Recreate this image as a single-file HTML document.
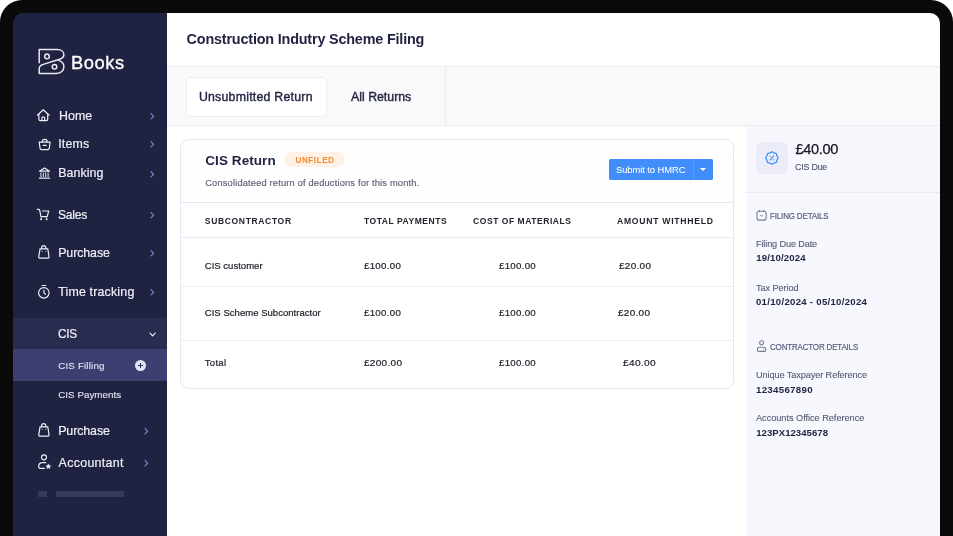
<!DOCTYPE html>
<html lang="en">
<head>
<meta charset="utf-8">
<title>Construction Industry Scheme Filing</title>
<style>
html,body{margin:0;padding:0;}
body{width:953px;height:536px;overflow:hidden;background:#fff;position:relative;font-family:"Liberation Sans",sans-serif;}
.frame{position:absolute;left:0;top:0;width:953px;height:620px;background:#0a0a0a;border-radius:22px 22px 0 0;}
.screen{position:absolute;left:13px;top:13px;width:927px;height:600px;border-radius:10px 10px 0 0;overflow:hidden;}
.page{position:absolute;left:-13px;top:-13px;width:953px;height:620px;will-change:transform;}
.page div,.page span,.page svg{position:absolute;}
.t{white-space:nowrap;line-height:1;}
.side{left:13px;top:13px;width:154px;height:600px;background:#1f2240;}
.hl{height:1px;}
svg{overflow:visible;}
.ic{fill:none;stroke:#eceef6;stroke-width:1.18;stroke-linecap:round;stroke-linejoin:round;}
</style>
</head>
<body>
<div class="frame"></div>
<div class="screen"><div class="page">
<div class="side"></div>
<div style="left:13px;top:318px;width:154px;height:31px;background:#292b4f;"></div>
<div style="left:13px;top:349px;width:154px;height:32px;background:#3c3f70;"></div>
<div style="left:38px;top:491px;width:9px;height:6px;background:#363957;"></div>
<div style="left:56px;top:491px;width:68px;height:6px;background:#363957;"></div>
<div style="left:167px;top:13px;width:773px;height:610px;background:#fff;"></div>
<div style="left:167px;top:66px;width:773px;height:60px;background:#f9f9fb;border-top:1px solid #ebebf0;border-bottom:1px solid #ebebf0;box-sizing:border-box;"></div>
<div style="left:186px;top:77px;width:141px;height:40px;background:#fff;border:1px solid #ececf3;border-radius:4px;box-sizing:border-box;"></div>
<div style="left:445px;top:67px;width:1px;height:58px;background:#ebebf0;"></div>
<div style="left:746px;top:126px;width:194px;height:500px;background:#f7f8fe;"></div>
<div class="hl" style="left:746px;top:192px;width:194px;background:#e8e9f3;"></div>
<div style="left:756px;top:142px;width:32px;height:32px;border-radius:7px;background:#ebecf7;"></div>
<div style="left:180px;top:139px;width:554px;height:250px;border:1px solid #e6e7f2;border-radius:9px;box-sizing:border-box;background:#fff;"></div>
<div style="left:182px;top:147px;width:550px;height:54px;background-image:radial-gradient(circle,#f1f2fa 0.55px,rgba(255,255,255,0) 1px),radial-gradient(circle,#f1f2fa 0.55px,rgba(255,255,255,0) 1px);background-size:5px 9px;background-position:0 0,2.5px 4.5px;"></div>
<div class="hl" style="left:181px;top:202px;width:552px;background:#e7e8f4;"></div>
<div class="hl" style="left:181px;top:237px;width:552px;background:#e9eaf5;"></div>
<div class="hl" style="left:181px;top:286.4px;width:552px;background:#ecedf6;"></div>
<div class="hl" style="left:181px;top:339.5px;width:552px;background:#ecedf6;"></div>
<div style="left:284px;top:152px;width:61px;height:15px;border-radius:8px;background:#fef1e6;"></div>
<div style="left:609px;top:159px;width:104px;height:21px;border-radius:1.5px;background:#408dfb;"></div>
<div style="left:693px;top:159px;width:1px;height:21px;background:#5a9bfb;"></div>
<div style="left:700.35px;top:167.8px;width:0;height:0;border-left:3.1px solid transparent;border-right:3.1px solid transparent;border-top:3.6px solid #fff;"></div>
<div style="left:135px;top:360px;width:11px;height:11px;border-radius:50%;background:#e3e4f7;"></div>
<div style="left:138px;top:365.05px;width:5px;height:0.9px;background:#2f325c;"></div>
<div style="left:140.05px;top:363px;width:0.9px;height:5px;background:#2f325c;"></div>
<svg style="left:38px;top:48px;" width="28" height="28" viewBox="38 48 28 28"><g fill="none" stroke="#e9eaf2" stroke-width="1.5" stroke-linejoin="round" stroke-linecap="round"><path d="M39.2 62.8V49.6H57.4C61.2 49.6 63.9 51.8 63.9 54.8C63.9 56.8 62.6 58.2 60.4 59L43.2 64.4C40.6 65.2 39.2 66.4 39.2 68.8V73.4H56.6C60.8 73.4 63.9 70.6 63.9 66.8C63.9 63.8 61.8 61.4 58.8 60.4"/><circle cx="47" cy="56.4" r="2.3"/><circle cx="54.5" cy="66.8" r="2.3"/></g></svg>
<svg class="ic" style="left:36px;top:108px;" width="15" height="15" viewBox="36 108 15 15"><path d="M37.4 115.2L43.3 109.8L49.2 115.2"/><path d="M38.9 114.2V119.2Q38.9 120.6 40.3 120.6H46.3Q47.7 120.6 47.7 119.2V114.2"/><path d="M41.9 120.4V118Q41.9 116.8 43.3 116.8Q44.7 116.8 44.7 118V120.4"/></svg>
<svg class="ic" style="left:37px;top:138px;" width="15" height="14" viewBox="37 138 15 14"><path d="M39.2 142.1H50.1L49.3 148.2Q49.1 149.7 47.6 149.7H41.7Q40.2 149.7 40 148.2Z"/><path d="M42.2 141.8Q42.2 139.3 44.7 139.3Q47.2 139.3 47.2 141.8"/><path d="M43.3 145.4H46.1"/></svg>
<svg class="ic" style="left:37px;top:166px;" width="15" height="14" viewBox="37 166 15 14"><path d="M39.4 171.2L44.5 167.9L49.6 171.2Z"/><path d="M40.9 172.9V176.6M43.3 172.9V176.6M45.7 172.9V176.6M48.1 172.9V176.6" stroke-width="1"/><path d="M39.4 178.2H49.6"/></svg>
<svg class="ic" style="left:36px;top:207px;" width="15" height="15" viewBox="36 207 15 15"><path d="M37.3 209.4H38.7Q39.4 209.4 39.6 210.1L41 216.6H47.2L48.7 211H42.3"/><path d="M41.2 217V218.2M46.6 217V218.2" stroke-width="0.8" opacity="0.7"/><circle cx="41.1" cy="219.3" r="0.45"/><circle cx="46.6" cy="219.3" r="0.45"/></svg>
<svg class="ic" style="left:37px;top:244px;" width="14" height="16" viewBox="37 244 14 16"><path d="M40 248.8H47.8L49 256.6Q49.2 258.2 47.6 258.2H40.2Q38.6 258.2 38.8 256.6Z"/><path d="M41.6 248.6V247.8Q41.6 245.6 43.7 245.6Q45.8 245.6 45.8 247.8V248.6"/><path d="M42 251.4V251.5M45.6 251.4V251.5" opacity="0.6"/></svg>
<svg class="ic" style="left:37px;top:284px;" width="14" height="16" viewBox="37 284 14 16"><circle cx="43.85" cy="292.8" r="5.25"/><path d="M42.2 285.5H45.7"/><path d="M43.9 290.3V292.7L45.5 294.2"/></svg>
<svg class="ic" style="left:37px;top:422px;" width="14" height="16" viewBox="37 244 14 16"><path d="M40 248.8H47.8L49 256.6Q49.2 258.2 47.6 258.2H40.2Q38.6 258.2 38.8 256.6Z"/><path d="M41.6 248.6V247.8Q41.6 245.6 43.7 245.6Q45.8 245.6 45.8 247.8V248.6"/><path d="M42 251.4V251.5M45.6 251.4V251.5" opacity="0.6"/></svg>
<svg class="ic" style="left:37px;top:453px;" width="16" height="17" viewBox="37 453 16 17"><circle cx="44" cy="457.3" r="2.5"/><path d="M45.8 462.7H42.4Q38.7 462.7 38.7 466.4V467Q38.7 468.3 40 468.3H44.4"/><path d="M48.40 464.10L49.13 465.59L50.78 465.83L49.59 466.99L49.87 468.62L48.40 467.85L46.93 468.62L47.21 466.99L46.02 465.83L47.67 465.59Z" fill="#eceef6" stroke-width="0.5"/></svg>
<svg style="left:148px;top:110px;" width="10" height="12" viewBox="148 110 10 12"><path d="M151 113.7L153.6 116.3L151 118.9" fill="none" stroke="#8187da" stroke-width="1.15" stroke-linecap="round" stroke-linejoin="round"/></svg>
<svg style="left:148px;top:138.1px;" width="10" height="12" viewBox="148 110 10 12"><path d="M151 113.7L153.6 116.3L151 118.9" fill="none" stroke="#8187da" stroke-width="1.15" stroke-linecap="round" stroke-linejoin="round"/></svg>
<svg style="left:148px;top:167.8px;" width="10" height="12" viewBox="148 110 10 12"><path d="M151 113.7L153.6 116.3L151 118.9" fill="none" stroke="#8187da" stroke-width="1.15" stroke-linecap="round" stroke-linejoin="round"/></svg>
<svg style="left:148px;top:208.9px;" width="10" height="12" viewBox="148 110 10 12"><path d="M151 113.7L153.6 116.3L151 118.9" fill="none" stroke="#8187da" stroke-width="1.15" stroke-linecap="round" stroke-linejoin="round"/></svg>
<svg style="left:148px;top:247.1px;" width="10" height="12" viewBox="148 110 10 12"><path d="M151 113.7L153.6 116.3L151 118.9" fill="none" stroke="#8187da" stroke-width="1.15" stroke-linecap="round" stroke-linejoin="round"/></svg>
<svg style="left:148px;top:286px;" width="10" height="12" viewBox="148 110 10 12"><path d="M151 113.7L153.6 116.3L151 118.9" fill="none" stroke="#8187da" stroke-width="1.15" stroke-linecap="round" stroke-linejoin="round"/></svg>
<svg style="left:142.2px;top:424.7px;" width="10" height="12" viewBox="148 110 10 12"><path d="M151 113.7L153.6 116.3L151 118.9" fill="none" stroke="#8187da" stroke-width="1.15" stroke-linecap="round" stroke-linejoin="round"/></svg>
<svg style="left:142.2px;top:456.9px;" width="10" height="12" viewBox="148 110 10 12"><path d="M151 113.7L153.6 116.3L151 118.9" fill="none" stroke="#8187da" stroke-width="1.15" stroke-linecap="round" stroke-linejoin="round"/></svg>
<svg style="left:148px;top:330px;" width="10" height="10" viewBox="148 330 10 10"><path d="M150 333.2L152.6 335.8L155.2 333.2" fill="none" stroke="#f0f1f8" stroke-width="1.2" stroke-linecap="round" stroke-linejoin="round"/></svg>
<svg style="left:764px;top:150px;" width="16" height="16" viewBox="764 150 16 16"><g fill="none" stroke="#408dfb" stroke-width="1.25" stroke-linecap="round" stroke-linejoin="round"><path d="M771.90 151.70L773.99 152.96L776.35 153.55L776.94 155.91L778.20 158.00L776.94 160.09L776.35 162.45L773.99 163.04L771.90 164.30L769.81 163.04L767.45 162.45L766.86 160.09L765.60 158.00L766.86 155.91L767.45 153.55L769.81 152.96Z"/><path d="M770.3 160.1L773.5 155.9" stroke-width="1.1"/><path d="M770.1 156.3V156.35M773.7 159.7V159.75" stroke-width="1.2"/></g></svg>
<svg style="left:755px;top:209px;" width="13" height="13" viewBox="755 209 13 13"><g fill="none" stroke="#787d96" stroke-width="1.1" stroke-linecap="round" stroke-linejoin="round"><rect x="757" y="211.2" width="9.1" height="8.9" rx="2"/><path d="M759.5 210.3V211.2M763.6 210.3V211.2"/><path d="M760.3 215.3L761.4 216.3L762.7 215" stroke-width="0.9"/></g></svg>
<svg style="left:755px;top:339px;" width="13" height="14" viewBox="755 339 13 14"><g fill="none" stroke="#787d96" stroke-width="1.1" stroke-linecap="round" stroke-linejoin="round"><circle cx="761.6" cy="342.8" r="2"/><path d="M759.5 347.3H763.7Q765.8 347.3 765.8 349.4V350.2Q765.8 351.4 764.6 351.4H758.6Q757.4 351.4 757.4 350.2V349.4Q757.4 347.3 759.5 347.3Z"/><path d="M763.5 349.4V349.45" stroke-width="0.9"/></g></svg>
<span class="t" style="left:70.89px;top:53.80px;font-size:18.2px;color:#ffffff;letter-spacing:0.546px;-webkit-text-stroke:0.3px #ffffff;transform:scaleX(1.0070);transform-origin:0 0;">Books</span>
<span class="t" style="left:58.90px;top:109.90px;font-size:12.4px;color:#eef0f8;letter-spacing:0.080px;-webkit-text-stroke:0.2px #eef0f8;">Home</span>
<span class="t" style="left:58.20px;top:138.40px;font-size:12.4px;color:#eef0f8;letter-spacing:0.176px;-webkit-text-stroke:0.2px #eef0f8;">Items</span>
<span class="t" style="left:58.20px;top:167.40px;font-size:12.4px;color:#eef0f8;letter-spacing:0.069px;-webkit-text-stroke:0.2px #eef0f8;">Banking</span>
<span class="t" style="left:58.40px;top:208.90px;font-size:12.4px;color:#eef0f8;letter-spacing:-0.248px;-webkit-text-stroke:0.2px #eef0f8;transform:scaleX(0.9729);transform-origin:0 0;">Sales</span>
<span class="t" style="left:58.20px;top:247.10px;font-size:12.4px;color:#eef0f8;letter-spacing:-0.093px;-webkit-text-stroke:0.2px #eef0f8;">Purchase</span>
<span class="t" style="left:58.20px;top:285.90px;font-size:12.4px;color:#eef0f8;letter-spacing:0.182px;-webkit-text-stroke:0.2px #eef0f8;">Time tracking</span>
<span class="t" style="left:58.20px;top:327.90px;font-size:12.4px;color:#eef0f8;letter-spacing:-0.248px;-webkit-text-stroke:0.2px #eef0f8;transform:scaleX(0.9550);transform-origin:0 0;">CIS</span>
<span class="t" style="left:58.20px;top:361.10px;font-size:9.8px;color:#e4e5f3;letter-spacing:0.161px;-webkit-text-stroke:0.1px #e4e5f3;">CIS Filling</span>
<span class="t" style="left:58.20px;top:389.60px;font-size:9.8px;color:#e4e5f3;letter-spacing:0.035px;-webkit-text-stroke:0.1px #e4e5f3;">CIS Payments</span>
<span class="t" style="left:58.20px;top:425.00px;font-size:12.4px;color:#eef0f8;letter-spacing:-0.093px;-webkit-text-stroke:0.2px #eef0f8;">Purchase</span>
<span class="t" style="left:58.60px;top:457.10px;font-size:12.4px;color:#eef0f8;letter-spacing:0.316px;-webkit-text-stroke:0.2px #eef0f8;">Accountant</span>
<span class="t" style="left:186.60px;top:32.10px;font-size:14.4px;color:#1f2240;letter-spacing:-0.184px;font-weight:700;">Construction Indutry Scheme Filing</span>
<span class="t" style="left:198.90px;top:91.10px;font-size:12.3px;color:#1f2240;letter-spacing:0.252px;-webkit-text-stroke:0.38px #1f2240;">Unsubmitted Return</span>
<span class="t" style="left:351.00px;top:91.10px;font-size:12.3px;color:#1f2240;letter-spacing:0.011px;-webkit-text-stroke:0.38px #1f2240;">All Returns</span>
<span class="t" style="left:205.30px;top:153.80px;font-size:13.5px;color:#1f2240;letter-spacing:0.066px;font-weight:700;">CIS Return</span>
<span class="t" style="left:295.50px;top:156.70px;font-size:8.2px;color:#f68b2c;letter-spacing:0.506px;font-weight:700;">UNFILED</span>
<span class="t" style="left:205.20px;top:178.80px;font-size:9.3px;color:#5d6072;letter-spacing:0.169px;-webkit-text-stroke:0.15px #5d6072;">Consolidateed return of deductions for this month.</span>
<span class="t" style="left:616.00px;top:164.70px;font-size:9.4px;color:#ffffff;letter-spacing:-0.066px;-webkit-text-stroke:0.05px #ffffff;">Submit to HMRC</span>
<span class="t" style="left:204.80px;top:217.00px;font-size:8.5px;color:#23232e;letter-spacing:0.667px;font-weight:700;">SUBCONTRACTOR</span>
<span class="t" style="left:364.00px;top:217.00px;font-size:8.5px;color:#23232e;letter-spacing:0.542px;font-weight:700;">TOTAL PAYMENTS</span>
<span class="t" style="left:473.10px;top:217.00px;font-size:8.5px;color:#23232e;letter-spacing:0.543px;font-weight:700;">COST OF MATERIALS</span>
<span class="t" style="left:617.30px;top:217.00px;font-size:8.5px;color:#23232e;letter-spacing:0.723px;font-weight:700;transform:scaleX(1.0139);transform-origin:0 0;">AMOUNT WITHHELD</span>
<span class="t" style="left:204.80px;top:260.80px;font-size:9.5px;color:#23232e;letter-spacing:0.020px;-webkit-text-stroke:0.2px #23232e;">CIS customer</span>
<span class="t" style="left:364.00px;top:260.80px;font-size:9.5px;color:#23232e;letter-spacing:0.285px;-webkit-text-stroke:0.2px #23232e;transform:scaleX(1.0205);transform-origin:0 0;">£100.00</span>
<span class="t" style="left:499.20px;top:260.80px;font-size:9.5px;color:#23232e;letter-spacing:0.285px;-webkit-text-stroke:0.2px #23232e;transform:scaleX(1.0177);transform-origin:0 0;">£100.00</span>
<span class="t" style="left:618.70px;top:260.80px;font-size:9.5px;color:#23232e;letter-spacing:0.285px;-webkit-text-stroke:0.2px #23232e;transform:scaleX(1.0497);transform-origin:0 0;">£20.00</span>
<span class="t" style="left:204.80px;top:307.80px;font-size:9.5px;color:#23232e;letter-spacing:0.037px;-webkit-text-stroke:0.2px #23232e;">CIS Scheme Subcontractor</span>
<span class="t" style="left:364.00px;top:307.80px;font-size:9.5px;color:#23232e;letter-spacing:0.285px;-webkit-text-stroke:0.2px #23232e;transform:scaleX(1.0205);transform-origin:0 0;">£100.00</span>
<span class="t" style="left:499.20px;top:307.80px;font-size:9.5px;color:#23232e;letter-spacing:0.285px;-webkit-text-stroke:0.2px #23232e;transform:scaleX(1.0177);transform-origin:0 0;">£100.00</span>
<span class="t" style="left:617.60px;top:307.80px;font-size:9.5px;color:#23232e;letter-spacing:0.285px;-webkit-text-stroke:0.2px #23232e;transform:scaleX(1.0497);transform-origin:0 0;">£20.00</span>
<span class="t" style="left:204.80px;top:358.20px;font-size:9.5px;color:#23232e;letter-spacing:0.285px;-webkit-text-stroke:0.2px #23232e;">Total</span>
<span class="t" style="left:364.00px;top:357.80px;font-size:9.5px;color:#23232e;letter-spacing:0.285px;-webkit-text-stroke:0.2px #23232e;transform:scaleX(1.0541);transform-origin:0 0;">£200.00</span>
<span class="t" style="left:499.20px;top:358.20px;font-size:9.5px;color:#23232e;letter-spacing:0.285px;-webkit-text-stroke:0.2px #23232e;transform:scaleX(1.0177);transform-origin:0 0;">£100.00</span>
<span class="t" style="left:623.00px;top:358.20px;font-size:9.5px;color:#23232e;letter-spacing:0.285px;-webkit-text-stroke:0.2px #23232e;transform:scaleX(1.0729);transform-origin:0 0;">£40.00</span>
<span class="t" style="left:795.50px;top:142.00px;font-size:14.5px;color:#15161f;letter-spacing:-0.290px;-webkit-text-stroke:0.25px #15161f;">£40.00</span>
<span class="t" style="left:795.40px;top:161.50px;font-size:9.7px;color:#4b4e66;letter-spacing:-0.194px;-webkit-text-stroke:0.1px #4b4e66;transform:scaleX(0.9099);transform-origin:0 0;">CIS Due</span>
<span class="t" style="left:770.00px;top:212.00px;font-size:8.7px;color:#5b607c;letter-spacing:-0.174px;-webkit-text-stroke:0.2px #5b607c;transform:scaleX(0.9199);transform-origin:0 0;">FILING DETAILS</span>
<span class="t" style="left:756.00px;top:240.00px;font-size:9.2px;color:#555a72;letter-spacing:-0.151px;-webkit-text-stroke:0.1px #555a72;">Filing Due Date</span>
<span class="t" style="left:756.20px;top:253.40px;font-size:9.6px;color:#1f2240;letter-spacing:0.147px;font-weight:700;">19/10/2024</span>
<span class="t" style="left:756.00px;top:283.60px;font-size:9.2px;color:#555a72;letter-spacing:-0.100px;-webkit-text-stroke:0.1px #555a72;">Tax Period</span>
<span class="t" style="left:756.00px;top:297.00px;font-size:9.6px;color:#1f2240;letter-spacing:0.288px;font-weight:700;">01/10/2024 - 05/10/2024</span>
<span class="t" style="left:770.00px;top:343.00px;font-size:8.7px;color:#5b607c;letter-spacing:-0.174px;-webkit-text-stroke:0.2px #5b607c;transform:scaleX(0.9174);transform-origin:0 0;">CONTRACTOR DETAILS</span>
<span class="t" style="left:756.00px;top:371.10px;font-size:9.2px;color:#555a72;letter-spacing:-0.107px;-webkit-text-stroke:0.1px #555a72;">Unique Taxpayer Reference</span>
<span class="t" style="left:756.20px;top:384.60px;font-size:9.6px;color:#1f2240;letter-spacing:0.288px;font-weight:700;transform:scaleX(1.0106);transform-origin:0 0;">1234567890</span>
<span class="t" style="left:756.00px;top:414.30px;font-size:9.2px;color:#555a72;letter-spacing:-0.034px;-webkit-text-stroke:0.1px #555a72;">Accounts Office Reference</span>
<span class="t" style="left:756.20px;top:428.20px;font-size:9.6px;color:#1f2240;letter-spacing:0.029px;font-weight:700;">123PX12345678</span>
</div></div>
</body>
</html>
